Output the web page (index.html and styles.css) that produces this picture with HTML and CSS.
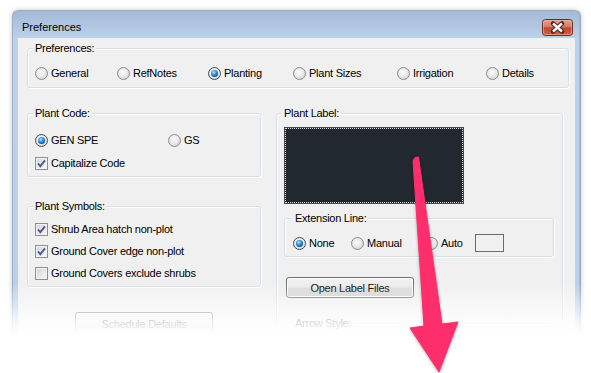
FILE: index.html
```html
<!DOCTYPE html>
<html>
<head>
<meta charset="utf-8">
<link rel="stylesheet" href="styles.css">
</head>
<body>
<div class="window">
  <div class="titlebar">
    <span class="title">Preferences</span>
    <span class="close">
      <svg width="31" height="17" viewBox="0 0 31 17">
        <defs>
          <linearGradient id="cg" x1="0" y1="0" x2="0" y2="1">
            <stop offset="0" stop-color="#e8a597"/>
            <stop offset=".45" stop-color="#d77a66"/>
            <stop offset=".52" stop-color="#c2462f"/>
            <stop offset="1" stop-color="#cf5f47"/>
          </linearGradient>
        </defs>
        <rect x=".5" y=".5" width="30" height="16" rx="3" fill="url(#cg)" stroke="#6b2b25"/>
        <rect x="1.5" y="1.5" width="28" height="14" rx="2" fill="none" stroke="#f0b9ad" stroke-opacity=".6"/>
        <path d="M11 4.5 L20 12.5 M20 4.5 L11 12.5" stroke="#4b2a27" stroke-width="4.6" stroke-linecap="round"/>
        <path d="M11 4.5 L20 12.5 M20 4.5 L11 12.5" stroke="#fbfbfb" stroke-width="2.4"/>
      </svg>
    </span>
  </div>
  <div class="client">
    <fieldset class="group prefs">
      <legend>Preferences:</legend>
      <div class="opt-row pref-row">
        <label class="opt"><span class="radio"></span>General</label>
        <label class="opt"><span class="radio"></span>RefNotes</label>
        <label class="opt"><span class="radio on"></span>Planting</label>
        <label class="opt"><span class="radio"></span>Plant Sizes</label>
        <label class="opt"><span class="radio"></span>Irrigation</label>
        <label class="opt"><span class="radio"></span>Details</label>
      </div>
    </fieldset>
    <div class="columns">
      <div class="col col-left">
        <fieldset class="group code">
          <legend>Plant Code:</legend>
          <div class="opt-row code-row">
            <label class="opt"><span class="radio on"></span>GEN SPE</label>
            <label class="opt"><span class="radio"></span>GS</label>
          </div>
          <label class="opt cap"><span class="check on"><svg width="11" height="11" viewBox="0 0 11 11"><path d="M2 5.5 L4.3 8.2 L9 2.3" fill="none" stroke="#4c5d96" stroke-width="1.9"/></svg></span>Capitalize Code</label>
        </fieldset>
        <fieldset class="group symbols">
          <legend>Plant Symbols:</legend>
          <label class="opt"><span class="check on"><svg width="11" height="11" viewBox="0 0 11 11"><path d="M2 5.5 L4.3 8.2 L9 2.3" fill="none" stroke="#4c5d96" stroke-width="1.9"/></svg></span>Shrub Area hatch non-plot</label>
          <label class="opt"><span class="check on"><svg width="11" height="11" viewBox="0 0 11 11"><path d="M2 5.5 L4.3 8.2 L9 2.3" fill="none" stroke="#4c5d96" stroke-width="1.9"/></svg></span>Ground Cover edge non-plot</label>
          <label class="opt"><span class="check"></span>Ground Covers exclude shrubs</label>
        </fieldset>
        <button class="btn sched">Schedule Defaults</button>
      </div>
      <div class="col col-right">
        <fieldset class="group label">
          <legend>Plant Label:</legend>
          <div class="preview"></div>
          <fieldset class="group ext">
            <legend>Extension Line:</legend>
            <div class="opt-row ext-row">
              <label class="opt"><span class="radio on"></span>None</label>
              <label class="opt"><span class="radio"></span>Manual</label>
              <label class="opt"><span class="radio"></span>Auto</label>
              <span class="swatch"></span>
            </div>
          </fieldset>
          <button class="btn open">Open Label Files</button>
          <fieldset class="group arrowstyle">
            <legend>Arrow Style:</legend>
          </fieldset>
        </fieldset>
      </div>
    </div>
  </div>
</div>
<div class="fade"></div>
<svg class="arrow" width="591" height="373" viewBox="0 0 591 373">
  <polygon points="413,161 415,157.5 418.5,157 442,324 458,322 439,372 410,328 424,326" fill="#fe2e6d" stroke="#fe2e6d" stroke-width="1" stroke-linejoin="round"/>
</svg>
</body>
</html>
```

FILE: styles.css
```css
html, body {
  margin: 0;
  width: 591px;
  height: 373px;
  overflow: hidden;
  background: #fff;
  font: 11px "Liberation Sans", Arial, sans-serif;
  letter-spacing: -0.25px;
  color: #000;
}

.window {
  margin: 10px 0 0 12px;
  width: 569px;
  height: 363px;
  box-sizing: border-box;
  border: 1px solid #9aaec6;
  border-bottom: none;
  border-radius: 6px 6px 0 0;
  background: linear-gradient(#a3b9d6, #bdd1ea 27px, #bad0ea);
  padding: 0 5px;
  display: flex;
  flex-direction: column;
  overflow: hidden;
  box-shadow: 0 0 5px rgba(0, 0, 0, .22), inset -1px 0 0 #86c2f0;
}

.titlebar {
  height: 27px;
  display: flex;
  align-items: flex-start;
  flex: none;
}

.title {
  margin: 10px 0 0 4px;
  line-height: 13px;
  font-size: 11px;
  letter-spacing: 0;
  color: #000;
}

.close {
  margin: 8px 2px 0 auto;
  width: 31px;
  height: 17px;
  display: block;
}
.close svg { display: block; }

.client {
  flex: 1;
  min-height: 0;
  background: #f0f0f0;
  padding: 4px 6px 0 9px;
  display: flex;
  flex-direction: column;
}

.group {
  margin: 0;
  min-width: 0;
  border: 1px solid #d5dfe5;
  border-radius: 3px;
  box-shadow: 1px 1px 0 #fff, inset 1px 1px 0 #fff;
}
.group legend {
  padding: 0 2px;
  margin-left: -2px;
  line-height: 13px;
  background: #f0f0f0;
}

.prefs {
  width: 542px;
  box-sizing: border-box;
  padding: 10px 7px 6px 7px;
  flex: none;
}

.opt {
  display: flex;
  align-items: center;
  gap: 3px;
  height: 16px;
  white-space: nowrap;
}

.opt-row { display: grid; }
.pref-row { grid-template-columns: 82px 91px 85px 104px 89px 1fr; }
.code-row { grid-template-columns: 133px 1fr; }
.ext-row { grid-template-columns: 58px 74px 50px 29px; height: 18px; align-items: center; }

.radio {
  width: 13px;
  height: 13px;
  box-sizing: border-box;
  border-radius: 50%;
  border: 1px solid #8d8d8d;
  background: radial-gradient(circle at 45% 40%, #fbfbfb 0, #ececec 40%, #cacaca 100%);
  flex: none;
  position: relative;
}
.radio.on { border-color: #3f4d5c; }
.radio.on::after {
  content: "";
  position: absolute;
  inset: 2px;
  border-radius: 50%;
  background: radial-gradient(circle at 40% 35%, #b4e6ff 0, #3d9ae0 35%, #0e5a97 72%, #083b68 100%);
}

.check {
  width: 13px;
  height: 13px;
  box-sizing: border-box;
  border: 1px solid #8e8f8f;
  background: linear-gradient(135deg, #d3d3d3, #f2f2f2 80%);
  box-shadow: inset 0 0 0 1px #f4f4f4;
  flex: none;
  display: flex;
  align-items: center;
  justify-content: center;
}
.check svg { display: block; }

.columns {
  display: flex;
  gap: 15px;
  margin-top: 19px;
  flex: 1;
  min-height: 0;
}

.col { display: flex; flex-direction: column; }
.col-left { width: 234px; }
.col-right { width: 287px; }

.code {
  padding: 12px 7px 5px 7px;
  display: flex;
  flex-direction: column;
  gap: 7px;
}

.symbols {
  margin-top: 23px;
  padding: 8px 7px 5px 7px;
  display: flex;
  flex-direction: column;
  gap: 6px;
}

.btn {
  font: 11px "Liberation Sans", Arial, sans-serif;
  letter-spacing: -0.25px;
  color: #000;
  border: 1px solid #707070;
  border-radius: 3px;
  background: linear-gradient(#f2f2f2 0, #ebebeb 48%, #dddddd 52%, #cfcfcf 100%);
  box-shadow: inset 0 0 0 1px #fcfcfc;
  padding: 0;
}

.sched {
  margin-top: 25px;
  align-self: center;
  width: 138px;
  height: 23px;
  flex: none;
}

.label {
  flex: 1;
  padding: 7px 8px 0 7px;
  display: flex;
  flex-direction: column;
  align-items: flex-start;
}

.preview {
  width: 180px;
  height: 77px;
  flex: none;
  box-sizing: border-box;
  background: #212830;
  border: 1px solid #4a4a4a;
  outline: 1px dotted #d9d9d9;
  outline-offset: -2px;
}

.ext {
  margin-top: 8px;
  width: 270px;
  box-sizing: border-box;
  padding: 9px 8px 4px 8px;
  flex: none;
}
.ext legend { margin-left: 0; }

.swatch {
  width: 29px;
  height: 18px;
  box-sizing: border-box;
  border: 1px solid #6b6b6b;
  background: #f0f0f0;
}

.open {
  margin: 20px 0 0 2px;
  width: 128px;
  height: 21px;
  flex: none;
}

.arrowstyle {
  margin-top: 19px;
  width: 270px;
  height: 40px;
  box-sizing: border-box;
  padding: 0 8px;
  flex: none;
}
.arrowstyle legend { margin-left: 0; }

.fade {
  position: absolute;
  left: 0;
  right: 0;
  top: 283px;
  bottom: 0;
  background: linear-gradient(rgba(255, 255, 255, 0) 0, rgba(255, 255, 255, .82) 38px, #fff 52px);
}

.arrow {
  position: absolute;
  left: 0;
  top: 0;
  filter: drop-shadow(0 1px 1.5px rgba(0, 0, 0, .3));
}
```
